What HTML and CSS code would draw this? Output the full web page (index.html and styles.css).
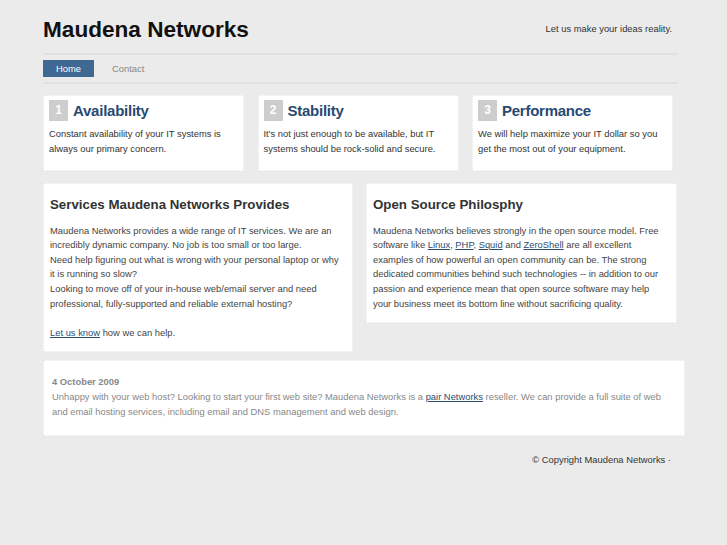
FILE: index.html
```html
<!DOCTYPE html>
<html lang="en">
<head>
<meta charset="utf-8">
<title>Maudena Networks</title>
<link rel="stylesheet" href="styles.css">
</head>
<body>
<div class="page">
  <header class="header">
    <h1 class="logo">Maudena Networks</h1>
    <p class="tagline">Let us make your ideas reality.</p>
  </header>
  <nav class="nav">
    <a class="nav-item active" href="#">Home</a>
    <a class="nav-item" href="#">Contact</a>
  </nav>

  <section class="features">
    <div class="card">
      <div class="card-head"><span class="num">1</span><h2 class="card-title">Availability</h2></div>
      <p class="card-text">Constant availability of your IT systems is<br>always our primary concern.</p>
    </div>
    <div class="card">
      <div class="card-head"><span class="num">2</span><h2 class="card-title">Stability</h2></div>
      <p class="card-text">It's not just enough to be available, but IT<br>systems should be rock-solid and secure.</p>
    </div>
    <div class="card">
      <div class="card-head"><span class="num">3</span><h2 class="card-title">Performance</h2></div>
      <p class="card-text">We will help maximize your IT dollar so you<br>get the most out of your equipment.</p>
    </div>
  </section>

  <section class="columns">
    <div class="panel">
      <h3 class="panel-title">Services Maudena Networks Provides</h3>
      <p class="panel-text">Maudena Networks provides a wide range of IT services. We are an<br>incredibly dynamic company. No job is too small or too large.<br>Need help figuring out what is wrong with your personal laptop or why<br>it is running so slow?<br>Looking to move off of your in-house web/email server and need<br>professional, fully-supported and reliable external hosting?<br><br><a href="#">Let us know</a> how we can help.</p>
    </div>
    <div class="panel">
      <h3 class="panel-title">Open Source Philosphy</h3>
      <p class="panel-text">Maudena Networks believes strongly in the open source model. Free<br>software like <a href="#">Linux</a>, <a href="#">PHP</a>, <a href="#">Squid</a> and <a href="#">ZeroShell</a> are all excellent<br>examples of how powerful an open community can be. The strong<br>dedicated communities behind such technologies -- in addition to our<br>passion and experience mean that open source software may help<br>your business meet its bottom line without sacrificing quality.</p>
    </div>
  </section>

  <section class="news">
    <p class="news-date">4 October 2009</p>
    <p class="news-text">Unhappy with your web host? Looking to start your first web site? Maudena Networks is a <a href="#">pair Networks</a> reseller. We can provide a full suite of web<br>and email hosting services, including email and DNS management and web design.</p>
  </section>

  <footer class="footer">© Copyright Maudena Networks ·</footer>
</div>
</body>
</html>
```
FILE: styles.css
```css
* { box-sizing: border-box; }

html, body {
  margin: 0;
  padding: 0;
  background: #ebebeb;
}

body {
  font-family: "Liberation Sans", Arial, sans-serif;
  color: #333;
  font-size: 9.4px;
}

.page {
  width: 635px;
  margin-left: 43px;
}

.header {
  display: flex;
  justify-content: space-between;
  align-items: flex-start;
  padding-top: 17px;
  padding-bottom: 10px;
  border-bottom: 2px solid #e1e1e1;
}

.logo {
  margin: 0;
  font-size: 22.6px;
  line-height: 26px;
  font-weight: bold;
  color: #111;
}

.tagline {
  margin: 6px 6px 0 0;
  line-height: 12px;
  color: #333;
}

.nav {
  display: flex;
  gap: 5px;
  padding: 5px 0 5px;
  border-bottom: 2px solid #e1e1e1;
}

.nav-item {
  display: block;
  height: 17px;
  line-height: 17px;
  padding: 0 13px;
  color: #888;
  text-decoration: none;
}

.nav-item.active {
  background: #3f6892;
  color: #fff;
}

.features {
  display: grid;
  grid-template-columns: 201px 201px 201px;
  column-gap: 13.5px;
  margin-top: 11px;
}

.card {
  background: #fff;
  border: 1px dotted #e6e6e6;
  padding: 4px 5px 14.5px;
}

.card-head {
  display: flex;
  align-items: center;
  gap: 5px;
}

.num {
  width: 19px;
  height: 21px;
  background: #cdcdcd;
  color: #fff;
  font-size: 12px;
  font-weight: bold;
  line-height: 21px;
  text-align: center;
}

.card-title {
  margin: 0;
  font-size: 15px;
  letter-spacing: -0.25px;
  line-height: 21px;
  color: #284a71;
}

.card-text {
  margin: 4.5px 0 0;
  line-height: 15px;
  color: #333;
}

.columns {
  display: grid;
  grid-template-columns: 310px 311px;
  column-gap: 13px;
  align-items: start;
  margin-top: 12px;
}

.panel {
  background: #fff;
  border: 1px dotted #e6e6e6;
  padding: 13px 6px 11px;
}

.panel-title {
  margin: 0;
  font-size: 13.3px;
  line-height: 16px;
  color: #333;
}

.panel-text {
  margin: 10.7px 0 0;
  line-height: 14.6px;
  color: #444;
}

a {
  color: #2b4d73;
  text-decoration: underline;
}

.news {
  width: 642px;
  margin-top: 8px;
  background: #fff;
  border: 1px dotted #e6e6e6;
  padding: 12.5px 8px 16px;
}

.news-date {
  margin: 0;
  font-weight: bold;
  line-height: 15px;
  color: #888;
}

.news-text {
  margin: 0;
  line-height: 15px;
  color: #888;
}

.footer {
  text-align: right;
  padding: 18px 7px 0 0;
  line-height: 12px;
  color: #333;
}
```
